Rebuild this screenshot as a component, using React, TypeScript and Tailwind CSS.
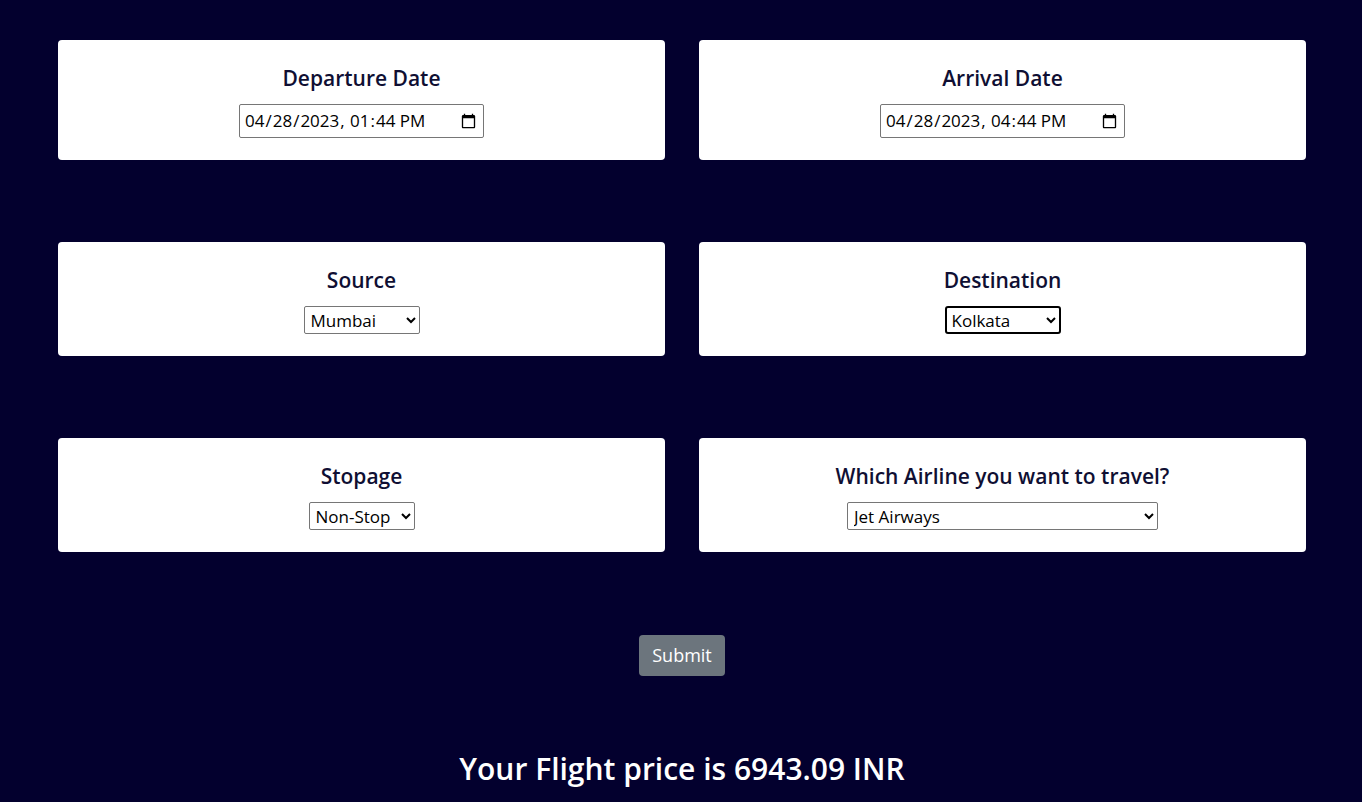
import React, {useState} from "react";

const Card: React.FC<{title: string; children: React.ReactNode}> = ({title, children}) => (
    <div className={'bg-white rounded-[4px] flex flex-col items-center pt-[26px] pb-[22px]'}>
        <h5 className={'text-[21px] leading-[24px] font-semibold text-[#0f0f33] mb-[14px]'}>{title}</h5>
        {children}
    </div>
);

const dateCls = 'w-[245px] h-[34px] text-[17px] text-black border border-[#767676] rounded-[2px] px-[4px]';
const selectCls = 'h-[28px] bg-white text-[17px] text-black border border-[#767676] rounded-[2px] pl-[2px] outline-none';

const App: React.FC = () => {
    const [dep, setDep] = useState<string>('2023-04-28T13:44');
    const [arr, setArr] = useState<string>('2023-04-28T16:44');
    const [source, setSource] = useState<string>('Mumbai');
    const [dest, setDest] = useState<string>('Kolkata');
    const [stops, setStops] = useState<string>('0');
    const [airline, setAirline] = useState<string>('Jet Airways');

    return (
        <div className={"w-full min-h-dvh bg-[#03002e] pt-[40px] pl-[58px] pr-[56px] pb-[40px] font-['Open_Sans','Noto_Sans',sans-serif]"}>
            <div className={'grid grid-cols-2 gap-x-[34px] gap-y-[82px]'}>
                <Card title={'Departure Date'}>
                    <input type="datetime-local" value={dep} onChange={e => setDep(e.target.value)} className={dateCls}/>
                </Card>
                <Card title={'Arrival Date'}>
                    <input type="datetime-local" value={arr} onChange={e => setArr(e.target.value)} className={dateCls}/>
                </Card>
                <Card title={'Source'}>
                    <select value={source} onChange={e => setSource(e.target.value)} className={selectCls + ' w-[116px]'}>
                        <option>Delhi</option>
                        <option>Kolkata</option>
                        <option>Mumbai</option>
                        <option>Chennai</option>
                        <option>Banglore</option>
                    </select>
                </Card>
                <Card title={'Destination'}>
                    <select value={dest} onChange={e => setDest(e.target.value)}
                            className={'w-[116px] h-[28px] bg-white text-[17px] text-black border-2 border-black rounded-[3px] pl-[1px] outline-none'}>
                        <option>Cochin</option>
                        <option>Delhi</option>
                        <option>New Delhi</option>
                        <option>Hyderabad</option>
                        <option>Kolkata</option>
                    </select>
                </Card>
                <Card title={'Stopage'}>
                    <select value={stops} onChange={e => setStops(e.target.value)} className={selectCls + ' w-[106px]'}>
                        <option value="0">Non-Stop</option>
                        <option value="1">1</option>
                        <option value="2">2</option>
                        <option value="3">3</option>
                        <option value="4">4</option>
                    </select>
                </Card>
                <Card title={'Which Airline you want to travel?'}>
                    <select value={airline} onChange={e => setAirline(e.target.value)} className={selectCls + ' w-[311px]'}>
                        <option>Jet Airways</option>
                        <option>IndiGo</option>
                        <option>Air India</option>
                        <option>Multiple carriers</option>
                        <option>SpiceJet</option>
                        <option>Vistara</option>
                        <option>Air Asia</option>
                        <option>GoAir</option>
                    </select>
                </Card>
            </div>

            <div className={'flex justify-center mt-[83px]'}>
                <button className={'w-[86px] h-[41px] bg-[#6c757d] rounded-[4px] text-white text-[18px]'}>
                    Submit
                </button>
            </div>

            <h2 className={'mt-[75px] text-center text-white text-[30px] leading-[36px] font-semibold'}>
                Your Flight price is 6943.09 INR
            </h2>
        </div>
    );
};

export default App;
